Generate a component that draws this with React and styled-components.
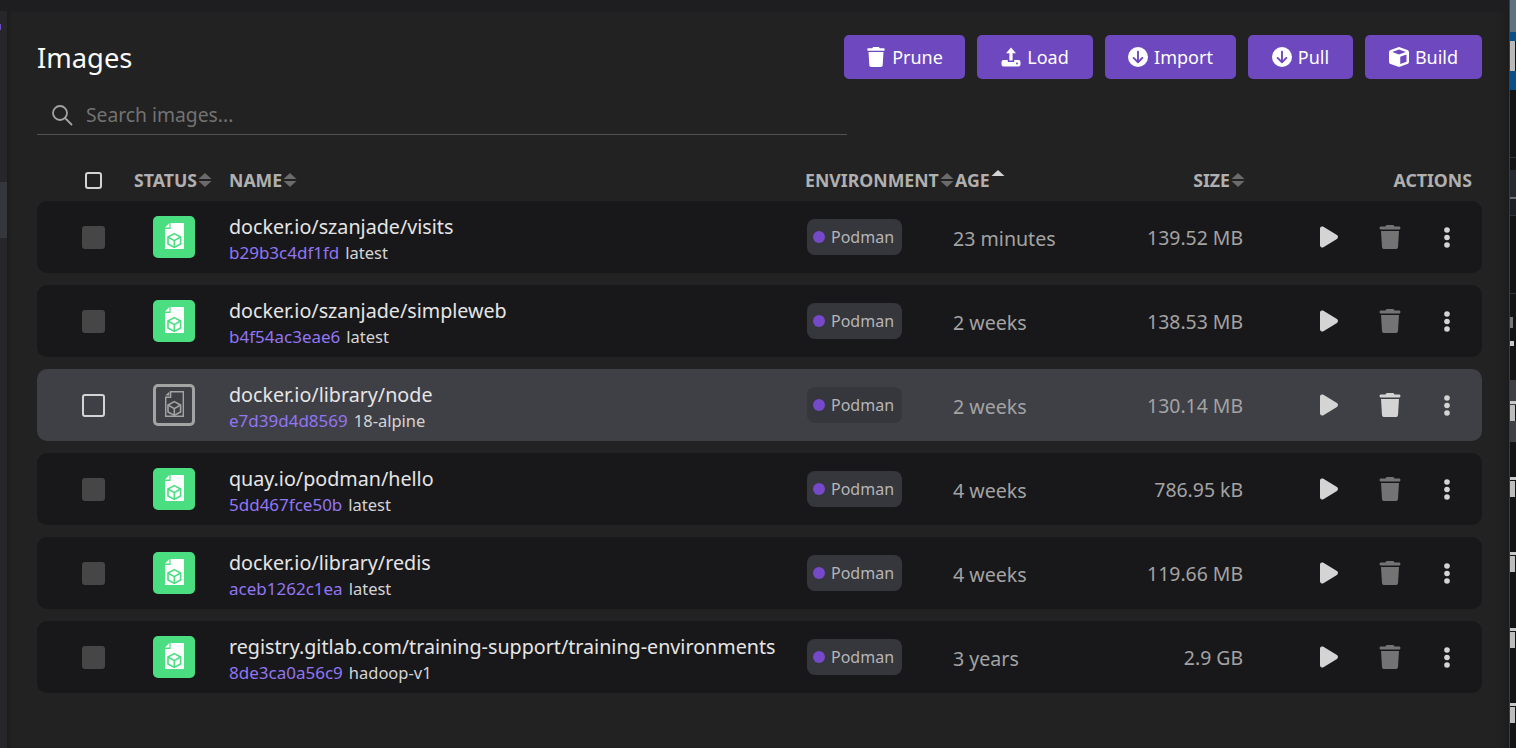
import React from 'react'
import styled, { createGlobalStyle } from 'styled-components'
import { FaTrash, FaCircleArrowDown, FaCube, FaPlay } from 'react-icons/fa6'

const images = [
    { name: 'docker.io/szanjade/visits', id: 'b29b3c4df1fd', tag: 'latest', age: '23 minutes', size: '139.52 MB', used: true },
    { name: 'docker.io/szanjade/simpleweb', id: 'b4f54ac3eae6', tag: 'latest', age: '2 weeks', size: '138.53 MB', used: true },
    { name: 'docker.io/library/node', id: 'e7d39d4d8569', tag: '18-alpine', age: '2 weeks', size: '130.14 MB', used: false },
    { name: 'quay.io/podman/hello', id: '5dd467fce50b', tag: 'latest', age: '4 weeks', size: '786.95 kB', used: true },
    { name: 'docker.io/library/redis', id: 'aceb1262c1ea', tag: 'latest', age: '4 weeks', size: '119.66 MB', used: true },
    { name: 'registry.gitlab.com/training-support/training-environments', id: '8de3ca0a56c9', tag: 'hadoop-v1', age: '3 years', size: '2.9 GB', used: true },
]

const LoadIcon = () => (
    <svg viewBox="0 0 20 20" fill="#fff">
        <path d="M10 0.5L15 6.2H11.6V13.5H8.4V6.2H5Z" />
        <path d="M2.5 13H6.8V15H13.2V13H17.5A2 2 0 0 1 19.5 15V17.5A2 2 0 0 1 17.5 19.5H2.5A2 2 0 0 1 0.5 17.5V15A2 2 0 0 1 2.5 13Z" />
        <circle cx="16" cy="16.6" r="1" fill="#6d48bf" />
    </svg>
)

const buttons = [
    { label: 'Prune', icon: <FaTrash />, width: 121 },
    { label: 'Load', icon: <LoadIcon />, width: 116 },
    { label: 'Import', icon: <FaCircleArrowDown />, width: 131 },
    { label: 'Pull', icon: <FaCircleArrowDown />, width: 105 },
    { label: 'Build', icon: <FaCube />, width: 117 },
]

// window behind the app, a thin slice shows on the right edge: [height, colour, width]
const dark = '#121416'
const rowTrash = [[3, '#c8c8c8', 6], [1, dark, 7], [16, '#bdbdbd', 5]]
const backdrop = [
    [32, '#5f7282', 7], [9, '#0a4f85', 7], [30, '#b9b9b9', 5], [19, '#0a4f85', 7],
    [67, dark, 7], [1, '#30343a', 7], [12, dark, 7], [27, '#262b33', 7], [2, '#6b7076', 7],
    [16, '#1c2026', 7], [1, '#30343a', 7], [77, dark, 7], [1, '#30343a', 7], [23, dark, 7],
    [11, '#77777b', 3], [13, dark, 7], [5, '#c8c8c8', 4], [34, '#141416', 7],
    [21, '#3f3f46', 7], [3, '#c8c8c8', 6], [1, '#3f3f46', 7], [16, '#bdbdbd', 5], [21, '#3f3f46', 7],
    [35, dark, 7], ...rowTrash, [55, dark, 7], ...rowTrash, [56, dark, 7], ...rowTrash, [55, dark, 7], ...rowTrash, [25, dark, 7],
]

const ImageBadge = ({ used }) => (
    <BadgeBox $used={used}>
        <svg width="42" height="42" viewBox="0 0 42 42" fill="none">
            {used ? (
                <>
                    <path d="M17.6 7H31V33H12V13H17.6Z" fill="#fff" />
                    <path d="M12 11.4L16.4 7V11.4Z" fill="#fff" />
                </>
            ) : (
                <>
                    <path d="M17.6 7.7H30.3V32.3H12.7V13.2H17.6Z" stroke="#a3a3a3" strokeWidth="1.4" />
                    <path d="M12.4 11.4L16.4 7.4V11.4Z" fill="#a3a3a3" />
                </>
            )}
            <g stroke={used ? '#4ade80' : '#a3a3a3'} strokeWidth="1.6" strokeLinejoin="round">
                <path d="M21.3 17.6L27.6 21V28L21.3 31.4L15 28V21Z" />
                <path d="M15 21L21.3 24.6L27.6 21M21.3 24.6V31.4" />
            </g>
        </svg>
    </BadgeBox>
)

const SortMark = ({ active }) => (
    <SortIcon viewBox="0 0 14 16" $active={active}>
        <path d="M7 1L13.5 7H0.5Z" fill={active ? '#d4d4d4' : '#6b6b6b'} />
        {!active && <path d="M0.5 9H13.5L7 15Z" fill="#6b6b6b" />}
    </SortIcon>
)

const Kebab = () => (
    <svg viewBox="0 0 6 21" width="6" height="21" fill="#d4d4d4">
        <circle cx="3" cy="3" r="2.8" />
        <circle cx="3" cy="10.5" r="2.8" />
        <circle cx="3" cy="18" r="2.8" />
    </svg>
)

export default function App() {
    return (
        <>
            <GlobalStyle />
            <TopBar />
            <Shell>
                <Rail>
                    <RailDot />
                    <RailActive />
                </Rail>
                <Main>
                    <TitleRow>
                        <Title>Images</Title>
                        <Buttons>
                            {buttons.map((b) => (
                                <Button key={b.label} $w={b.width}>{b.icon}{b.label}</Button>
                            ))}
                        </Buttons>
                    </TitleRow>
                    <SearchBar>
                        <svg width="22" height="22" viewBox="0 0 22 22" fill="none" stroke="#a3a3a3" strokeWidth="1.8">
                            <circle cx="9" cy="9" r="7" />
                            <path d="M14 14L20.5 20.5" strokeLinecap="round" />
                        </svg>
                        <SearchText>Search images...</SearchText>
                    </SearchBar>
                    <TableHead>
                        <CheckCell><HeadCheck /></CheckCell>
                        <HeadCell>STATUS<SortMark /></HeadCell>
                        <HeadCell>NAME<SortMark /></HeadCell>
                        <HeadCell>ENVIRONMENT<SortMark /></HeadCell>
                        <HeadCell $inset>AGE<SortMark active /></HeadCell>
                        <HeadCell $right>SIZE<SortMark /></HeadCell>
                        <HeadCell $right $end>ACTIONS</HeadCell>
                    </TableHead>
                    <Rows>
                        {images.map((img) => (
                            <Row key={img.id} $hover={!img.used}>
                                <CheckCell><RowCheck $hover={!img.used} /></CheckCell>
                                <StatusCell><ImageBadge used={img.used} /></StatusCell>
                                <NameCell>
                                    <ImageName>{img.name}</ImageName>
                                    <ImageMeta><ImageId>{img.id}</ImageId><Tag>{img.tag}</Tag></ImageMeta>
                                </NameCell>
                                <div><EnvChip><EnvDot />Podman</EnvChip></div>
                                <Age>{img.age}</Age>
                                <Size>{img.size}</Size>
                                <Actions>
                                    <ActionIcon $size={24}><FaPlay /></ActionIcon>
                                    <ActionIcon $size={24} $dim={img.used}><FaTrash /></ActionIcon>
                                    <ActionIcon><Kebab /></ActionIcon>
                                </Actions>
                            </Row>
                        ))}
                    </Rows>
                </Main>
                <Backdrop>
                    {backdrop.map(([h, c, w], i) => <BackdropPart key={i} $h={h} $c={c} $w={w} />)}
                </Backdrop>
            </Shell>
        </>
    )
}

const GlobalStyle = createGlobalStyle`
    html, body {
        margin: 0;
        height: 748px;
        overflow: hidden;
        background: #222222;
        font-family: "Noto Sans", "Open Sans", sans-serif;
    }
`

const TopBar = styled.div`
    height: 11px;
    background: #1e1e20;
`

const Shell = styled.div`
    display: flex;
    height: 737px;
`

const Rail = styled.div`
    width: 7px;
    flex: none;
    background: #27272a;
    padding-top: 13px;
    box-sizing: border-box;
`

const RailDot = styled.div`
    width: 1px;
    height: 6px;
    background: #6d48bf;
`

const RailActive = styled.div`
    height: 56px;
    margin-top: 152px;
    background: #36363d;
`

const Main = styled.div`
    width: 1502px;
    flex: none;
    box-sizing: border-box;
    padding: 24px 0 0 30px;
    background: #222222;
    box-shadow: inset 4px 0 5px -3px rgba(0, 0, 0, 0.3), inset -10px 0 8px -8px rgba(0, 0, 0, 0.25);
`

const TitleRow = styled.div`
    width: 1445px;
    height: 44px;
    display: flex;
    align-items: center;
    justify-content: space-between;
`

const Title = styled.h1`
    margin: 0;
    padding-top: 2px;
    font-size: 27.3px;
    line-height: 44px;
    font-weight: 400;
    color: #fafafa;
`

const Buttons = styled.div`
    display: flex;
    column-gap: 12px;
`

const Button = styled.div`
    width: ${(p) => p.$w}px;
    height: 44px;
    display: flex;
    align-items: center;
    justify-content: center;
    column-gap: 6px;
    border-radius: 5px;
    background: #6d48bf;
    color: #ffffff;
    font-size: 18px;
    svg {
        width: 20px;
        height: 20px;
    }
`

const SearchBar = styled.div`
    width: 810px;
    height: 40px;
    margin-top: 16px;
    box-sizing: border-box;
    display: flex;
    align-items: center;
    column-gap: 13px;
    padding-left: 14px;
    border-bottom: 1px solid #525252;
`

const SearchText = styled.span`
    font-size: 19.3px;
    color: #737373;
`

const columns = '97px 95px 576px 148px 150px 142px 237px'

const TableHead = styled.div`
    width: 1445px;
    height: 24px;
    margin-top: 33px;
    display: grid;
    grid-template-columns: ${columns};
    align-items: center;
`

const HeadCell = styled.div`
    display: flex;
    align-items: center;
    justify-content: ${(p) => (p.$right ? 'flex-end' : 'flex-start')};
    padding-right: ${(p) => (p.$end ? '10px' : '0')};
    padding-left: ${(p) => (p.$inset ? '2px' : '0')};
    font-size: 17.7px;
    font-weight: 700;
    color: #b0b0b0;
    white-space: nowrap;
`

const SortIcon = styled.svg`
    width: 14px;
    height: 16px;
    flex: none;
    margin-left: 1px;
    margin-top: ${(p) => (p.$active ? '-7px' : '0')};
`

const CheckCell = styled.div`
    display: flex;
    justify-content: center;
    padding-left: 15px;
`

const HeadCheck = styled.div`
    width: 17px;
    height: 17px;
    box-sizing: border-box;
    border: 2px solid #d4d4d4;
    border-radius: 3px;
`

const Rows = styled.div`
    margin-top: 9px;
    width: 1445px;
    display: flex;
    flex-direction: column;
    row-gap: 12px;
`

const Row = styled.div`
    height: 72px;
    display: grid;
    grid-template-columns: ${columns};
    align-items: center;
    border-radius: 10px;
    background: ${(p) => (p.$hover ? '#3f3f46' : '#18181b')};
`

const RowCheck = styled.div`
    width: 23px;
    height: 23px;
    box-sizing: border-box;
    border-radius: 3px;
    background: ${(p) => (p.$hover ? 'transparent' : '#464646')};
    border: ${(p) => (p.$hover ? '2px solid #d4d4d4' : 'none')};
`

const StatusCell = styled.div`
    padding-left: 19px;
    display: flex;
`

const BadgeBox = styled.div`
    width: 42px;
    height: 42px;
    border-radius: 5px;
    background: ${(p) => (p.$used ? '#4ade80' : 'transparent')};
    box-shadow: ${(p) => (p.$used ? 'none' : 'inset 0 0 0 3px #a3a3a3')};
    svg {
        display: block;
    }
`

const NameCell = styled.div`
    display: flex;
    flex-direction: column;
    padding-top: 2px;
`

const ImageName = styled.div`
    font-size: 19.7px;
    line-height: 26px;
    color: #e5e5e5;
    white-space: nowrap;
`

const ImageMeta = styled.div`
    display: flex;
    column-gap: 6px;
    margin-top: 2px;
    font-size: 16.5px;
    line-height: 21px;
`

const ImageId = styled.span`
    font-size: 17px;
    color: #9275f3;
`

const Tag = styled.span`
    color: #d4d4d4;
`

const EnvChip = styled.div`
    width: 95px;
    height: 36px;
    margin-left: 2px;
    box-sizing: border-box;
    display: flex;
    align-items: center;
    column-gap: 6px;
    padding-left: 6px;
    border-radius: 8px;
    background: #36363d;
    color: #b5b5b5;
    font-size: 16px;
`

const EnvDot = styled.span`
    width: 12px;
    height: 12px;
    border-radius: 50%;
    background: #7549c9;
`

const Age = styled.div`
    padding-top: 2px;
    font-size: 19.6px;
    color: #a3a3a3;
`

const Size = styled.div`
    padding-right: 2px;
    font-size: 19.4px;
    color: #a3a3a3;
    text-align: right;
`

const Actions = styled.div`
    display: grid;
    grid-template-columns: 61px 57px 40px;
    padding-left: 64px;
`

const ActionIcon = styled.div`
    width: 40px;
    height: 40px;
    display: flex;
    align-items: center;
    justify-content: center;
    color: ${(p) => (p.$dim ? '#737373' : '#d4d4d4')};
    svg {
        width: ${(p) => (p.$size ? `${p.$size}px` : 'auto')};
        height: ${(p) => (p.$size ? `${p.$size}px` : '21px')};
    }
`

const Backdrop = styled.div`
    width: 7px;
    flex: none;
    margin-top: -11px;
    height: 748px;
    border-left: 1px solid #3c3c3c;
    background: ${dark};
    overflow: hidden;
`

const BackdropPart = styled.div`
    width: ${(p) => p.$w}px;
    height: ${(p) => p.$h}px;
    background: ${(p) => p.$c};
`
